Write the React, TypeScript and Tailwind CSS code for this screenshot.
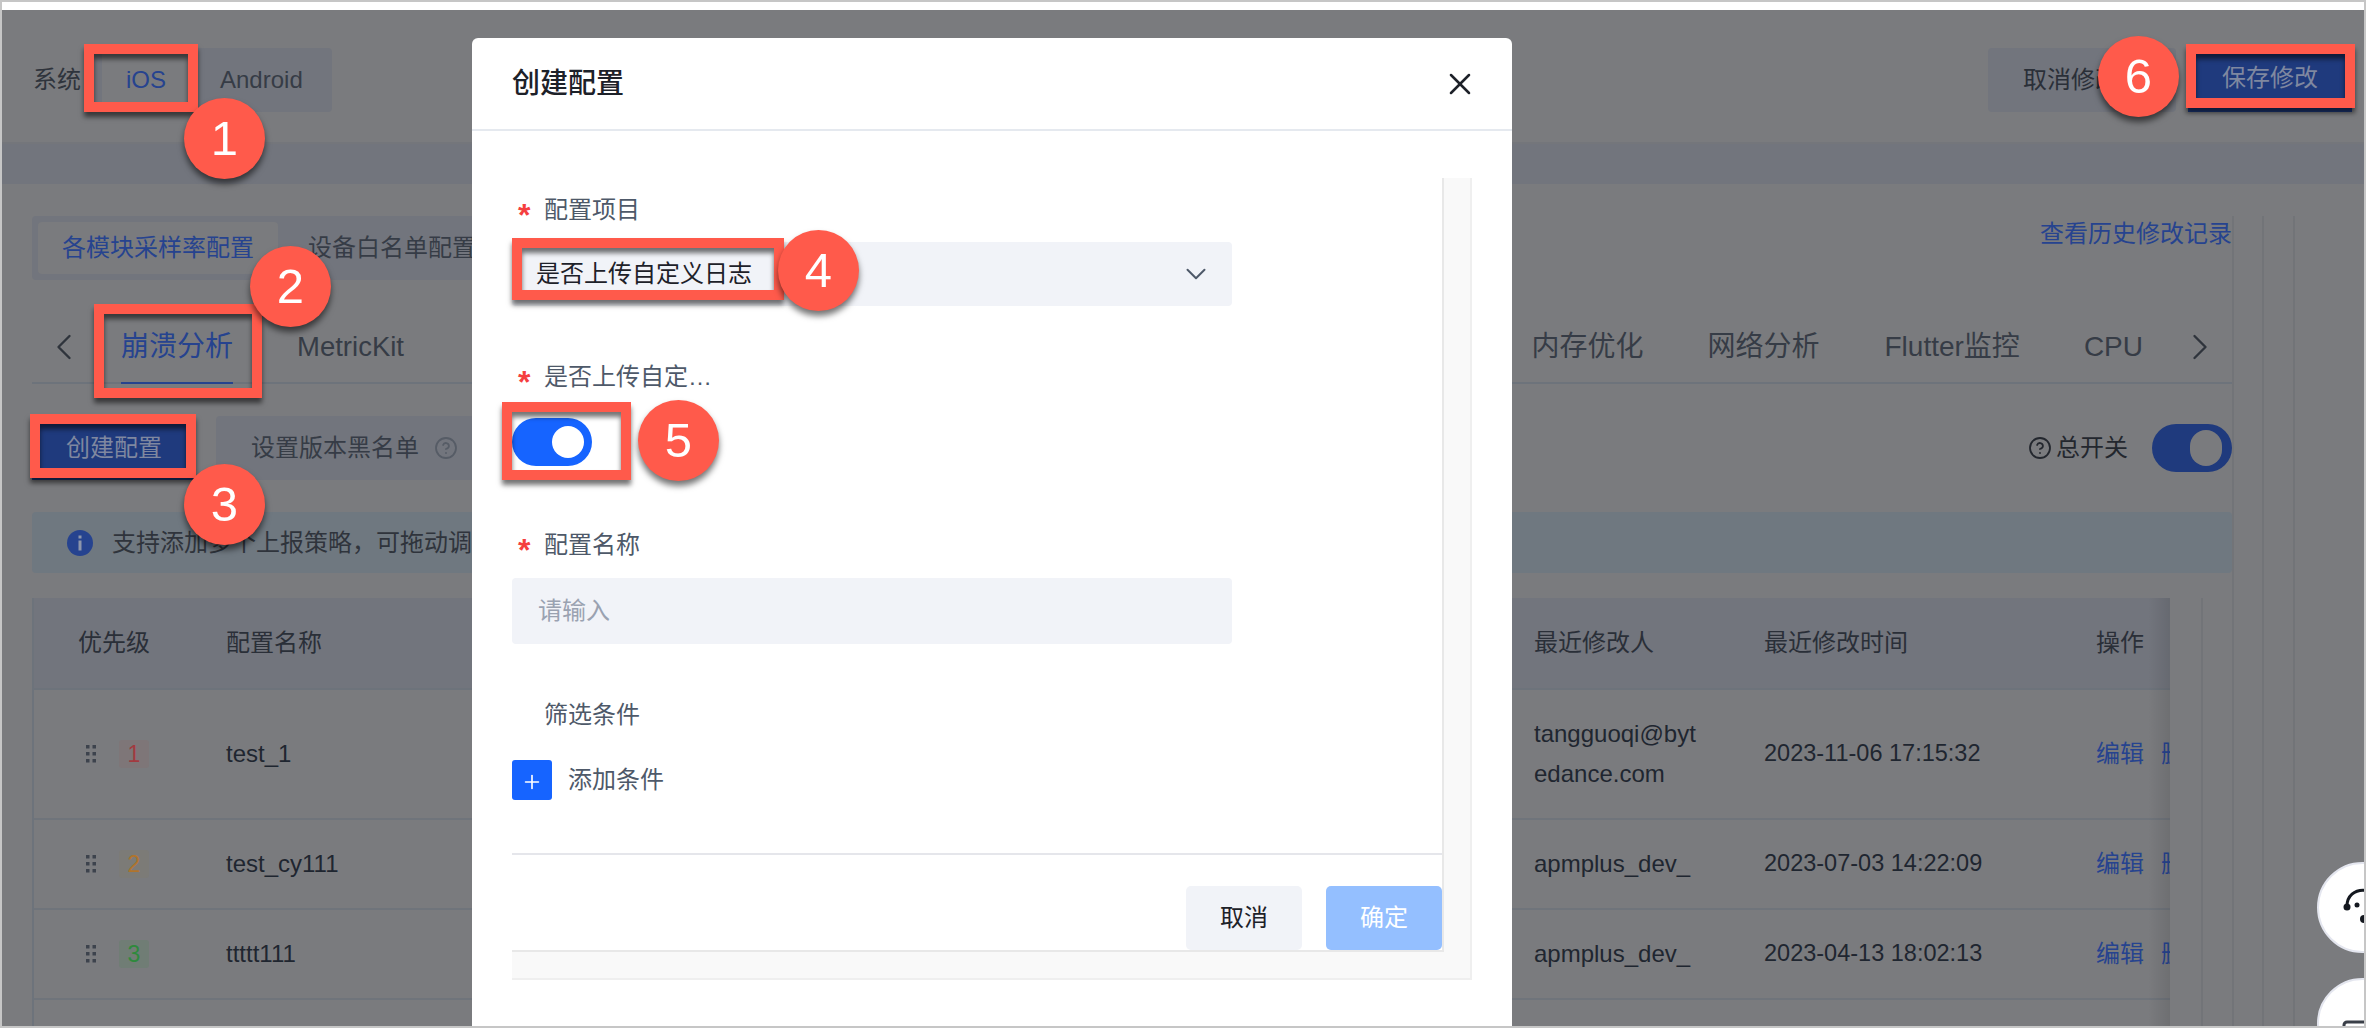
import { ChevronDown, ChevronLeft, ChevronRight, CircleHelp, Plus, X } from "lucide-react";

const rows = [
  { id: 1, name: "test_1", badge: "bg-[#7e7678] text-[#a23a40]", user: ["tangguoqi@byt", "edance.com"], time: "2023-11-06 17:15:32", h: "h-[130px]" },
  { id: 2, name: "test_cy111", badge: "bg-[#7c7b77] text-[#b0742c]", user: ["apmplus_dev_"], time: "2023-07-03 14:22:09", h: "h-[90px]" },
  { id: 3, name: "ttttt111", badge: "bg-[#707d75] text-[#2e8a3c]", user: ["apmplus_dev_"], time: "2023-04-13 18:02:13", h: "h-[90px]" },
];

function DragDots() {
  return (
    <svg width="10" height="18" viewBox="0 0 10 18" className="fill-[#3d434d]">
      <rect x="0" y="0" width="3.5" height="3.5" />
      <rect x="6.5" y="0" width="3.5" height="3.5" />
      <rect x="0" y="7" width="3.5" height="3.5" />
      <rect x="6.5" y="7" width="3.5" height="3.5" />
      <rect x="0" y="14" width="3.5" height="3.5" />
      <rect x="6.5" y="14" width="3.5" height="3.5" />
    </svg>
  );
}

function FieldLabel({ text, required = true }: { text: string; required?: boolean }) {
  return (
    <div className="flex h-[32px] items-center pl-[6px] text-[24px] leading-[32px] text-[#4e5969]">
      <span className="w-[26px] pt-[9px] text-[32px] font-bold leading-none text-[#f53f3f]">{required ? "*" : ""}</span>
      {text}
    </div>
  );
}

function Dialog() {
  return (
    <div className="absolute left-[472px] top-[38px] z-20 flex h-[988px] w-[1040px] flex-col rounded-t-[6px] bg-white">
      <div className="flex h-[93px] shrink-0 items-center justify-between border-b-2 border-[#e5e9ef] pl-[40px] pr-[34px]">
        <span className="text-[28px] font-medium text-[#1d2129]">创建配置</span>
        <X size={36} strokeWidth={1.7} className="text-[#1d2129]" />
      </div>
      <div className="pl-[40px] pt-[47px]">
        <div className="h-[802px] w-[960px] border-b-2 border-r-2 border-[#efefef] bg-[#f9f9f9]">
          <div className="flex h-[774px] w-[932px] flex-col border-b-2 border-r-2 border-[#e8e8e8] bg-white pt-[16px]">
            <FieldLabel text="配置项目" />
            <div className="mt-[16px] flex h-[64px] w-[720px] items-center justify-between rounded-[4px] bg-[#f1f3f8] pl-[24px] pr-[19px] text-[24px] text-[#1d2129]">
              是否上传自定义日志
              <ChevronDown size={34} strokeWidth={1.4} className="text-[#4e5969]" />
            </div>
            <div className="mt-[55px]">
              <FieldLabel text="是否上传自定…" />
            </div>
            <div className="mt-[25px] flex h-[48px] w-[80px] items-center justify-end rounded-full bg-[#1664ff] pr-[8px]">
              <span className="h-[32px] w-[32px] rounded-full bg-white" />
            </div>
            <div className="mt-[63px]">
              <FieldLabel text="配置名称" />
            </div>
            <div className="mt-[17px] flex h-[66px] w-[720px] items-center rounded-[4px] bg-[#f1f3f8] pl-[26px] text-[24px] text-[#9aa2b1]">
              请输入
            </div>
            <div className="mt-[55px]">
              <FieldLabel text="筛选条件" required={false} />
            </div>
            <div className="mt-[29px] flex h-[40px] items-center gap-[16px] text-[24px] text-[#4e5969]">
              <span className="flex h-[40px] w-[40px] items-center justify-center rounded-[3px] bg-[#1664ff]">
                <Plus size={22} strokeWidth={1.8} className="mt-[4px] text-white" />
              </span>
              添加条件
            </div>
            <div className="mt-[53px] flex justify-end gap-[24px] border-t-2 border-[#e5e6eb] pt-[31px]">
              <span className="flex h-[64px] w-[116px] items-center justify-center rounded-[5px] bg-[#f1f3f8] text-[24px] text-[#1d2129]">
                取消
              </span>
              <span className="flex h-[64px] w-[116px] items-center justify-center rounded-[5px] bg-[#94bfff] text-[24px] text-white">
                确定
              </span>
            </div>
          </div>
        </div>
      </div>
    </div>
  );
}

function Annotations() {
  const frame =
    "absolute z-30 border-[10px] border-[#ff5a4b] shadow-[0_5px_5px_rgba(0,0,0,0.55),inset_0_5px_5px_rgba(0,0,0,0.55)]";
  const badge =
    "absolute z-40 flex h-[81px] w-[81px] items-center justify-center rounded-full bg-[#ff5a4b] text-[49px] leading-none text-white shadow-[0_5px_6px_rgba(0,0,0,0.55)]";
  return (
    <>
      <div className={`${frame} left-[84px] top-[44px] h-[68px] w-[114px]`} />
      <div className={`${frame} left-[94px] top-[304px] h-[94px] w-[168px]`} />
      <div className={`${frame} left-[30px] top-[414px] h-[64px] w-[166px]`} />
      <div className={`${frame} left-[512px] top-[238px] h-[62px] w-[272px]`} />
      <div className={`${frame} left-[502px] top-[402px] h-[78px] w-[129px]`} />
      <div className={`${frame} left-[2186px] top-[44px] h-[64px] w-[169px]`} />
      <div className={`${badge} left-[184px] top-[98px]`}>1</div>
      <div className={`${badge} left-[250px] top-[246px]`}>2</div>
      <div className={`${badge} left-[184px] top-[464px]`}>3</div>
      <div className={`${badge} left-[778px] top-[230px]`}>4</div>
      <div className={`${badge} left-[638px] top-[400px]`}>5</div>
      <div className={`${badge} left-[2098px] top-[36px]`}>6</div>
    </>
  );
}

export default function App() {
  return (
    <div className="relative h-[1028px] w-[2366px] overflow-hidden bg-white pt-[10px] font-['Liberation_Sans','Noto_Sans_CJK_SC',sans-serif] text-[24px] text-[#2a2f38]">
      <div className="ml-[2px] flex h-[1016px] w-[2362px] flex-col bg-[#7a7b7e]">
        {/* top bar */}
        <div className="flex h-[134px] shrink-0 items-start justify-between border-b-2 border-[#74767b] pl-[31px] pr-[12px] pt-[38px]">
          <div className="flex items-center gap-[13px]">
            <span className="w-[48px] text-[#2f343c]">系统</span>
            <div className="flex h-[64px] items-center rounded-[4px] bg-[#72757d] pl-[8px] pr-[29px]">
              <span className="flex h-[52px] w-[88px] items-center justify-center bg-[#7a7b7e] text-[#26438f]">iOS</span>
              <span className="ml-[30px] text-[#363c46]">Android</span>
            </div>
          </div>
          <div className="flex gap-[12px]">
            <span className="flex h-[64px] w-[188px] items-center rounded-[4px] bg-[#72757d] pl-[35px] text-[#2a2f38]">取消修改</span>
            <span className="flex h-[64px] w-[164px] items-center justify-center bg-[#1f3a7d] pb-[4px] text-[#7f88a0]">保存修改</span>
          </div>
        </div>
        <div className="h-[40px] shrink-0 bg-[#72757d]" />

        <div className="flex min-h-0 flex-1 pt-[32px]">
          <div className="flex w-[2230px] shrink-0 flex-col pl-[30px]">
            <div className="flex h-[64px] shrink-0 items-start justify-between">
              <div className="flex h-[64px] w-[500px] items-center rounded-[4px] bg-[#72757d] pl-[6px]">
                <span className="flex h-[52px] w-[240px] items-center justify-center rounded-[4px] bg-[#7a7b7e] text-[#26438f]">各模块采样率配置</span>
                <span className="ml-[30px] text-[#363c46]">设备白名单配置</span>
              </div>
              <span className="text-[24px] leading-[36px] text-[#26438f]">查看历史修改记录</span>
            </div>

            {/* module tabs */}
            <div className="flex h-[104px] shrink-0 items-end justify-between border-b-2 border-[#6d737b] text-[28px] leading-[32px] text-[#363c46]">
              <div className="flex items-end">
                <ChevronLeft size={44} strokeWidth={1.3} className="mb-[13px] ml-[10px] text-[#2f343c]" />
                <span className="-mb-[2px] ml-[35px] border-b-2 border-[#26438f] pb-[19px] text-[#26438f]">崩溃分析</span>
                <span className="ml-[64px] pb-[19px] text-[27.5px]">MetricKit</span>
              </div>
              <div className="flex items-end">
                <span className="pb-[19px]">内存优化</span>
                <span className="ml-[64px] pb-[19px]">网络分析</span>
                <span className="ml-[65px] pb-[19px]">Flutter监控</span>
                <span className="ml-[64px] pb-[19px]">CPU</span>
                <ChevronRight size={44} strokeWidth={1.3} className="mb-[13px] ml-[35px] mr-[10px] text-[#2f343c]" />
              </div>
            </div>

            <div className="mt-[32px] flex h-[64px] shrink-0 items-center justify-between">
              <div className="flex items-center gap-[20px]">
                <span className="flex h-[64px] w-[164px] items-center justify-center bg-[#1f3a7d] text-[#7f88a0]">创建配置</span>
                <span className="flex h-[64px] w-[300px] items-center rounded-[4px] bg-[#72757d] pl-[35px] text-[#363c46]">
                  设置版本黑名单
                  <CircleHelp size={24} strokeWidth={1.8} className="ml-[15px] text-[#565c66]" />
                </span>
              </div>
              <div className="flex items-center">
                <CircleHelp size={24} strokeWidth={1.8} className="text-[#23272e]" />
                <span className="ml-[4px] text-[#23272e]">总开关</span>
                <span className="ml-[24px] flex h-[48px] w-[80px] items-center justify-end rounded-full bg-[#1f3a7d] pr-[10px]">
                  <span className="h-[36px] w-[32px] rounded-full bg-[#7a7b7e]" />
                </span>
              </div>
            </div>

            <div className="mt-[32px] flex h-[61px] shrink-0 items-center rounded-[4px] bg-[#6f7880] pl-[35px] text-[#2f343c]">
              <svg width="26" height="26" viewBox="0 0 26 26">
                <circle cx="13" cy="13" r="13" className="fill-[#26438f]" />
                <rect x="11.5" y="5.5" width="3" height="3" className="fill-[#8d96ab]" />
                <rect x="11.5" y="10.5" width="3" height="10" className="fill-[#8d96ab]" />
              </svg>
              <span className="ml-[19px] whitespace-nowrap">支持添加多个上报策略，可拖动调整优先级</span>
            </div>

            {/* config table */}
            <div className="mt-[25px] flex min-h-0 flex-1">
              <div className="relative w-[2138px] shrink-0 overflow-hidden border-l-2 border-[#6d737b]">
                <div className="grid h-[92px] grid-cols-[192px_1308px_230px_332px_74px] items-center border-b-2 border-[#6d737b] bg-[#72757d] text-[#2a2f38]">
                  <span className="pl-[44px]">优先级</span>
                  <span>配置名称</span>
                  <span>最近修改人</span>
                  <span>最近修改时间</span>
                  <span>操作</span>
                </div>
                {rows.map((r) => (
                  <div key={r.id} className={`grid ${r.h} grid-cols-[192px_1308px_230px_332px_74px] items-center border-b-2 border-[#6f747b] text-[#1f2630]`}>
                    <div className="flex items-center pl-[52px]">
                      <DragDots />
                      <span className={`ml-[23px] flex h-[28px] w-[30px] items-center justify-center rounded-[3px] text-[23px] ${r.badge}`}>{r.id}</span>
                    </div>
                    <span>{r.name}</span>
                    <div className="leading-[40px]">
                      {r.user.map((line) => (
                        <div key={line}>{line}</div>
                      ))}
                    </div>
                    <span className="text-[23.5px]">{r.time}</span>
                    <div className="flex gap-[17px] whitespace-nowrap text-[#26438f]">
                      <span>编辑</span>
                      <span>删除</span>
                    </div>
                  </div>
                ))}
                <div className="absolute bottom-0 right-0 top-0 w-[22px] bg-gradient-to-r from-transparent to-black/10" />
              </div>
              <div className="w-[33px] border-r-2 border-[#727478]" />
            </div>
          </div>
          <div className="w-[30px] border-l-2 border-[#727478]" />
          <div className="w-[31px] border-l-2 border-[#727478]" />
          <div className="flex-1 border-l-2 border-[#727478]" />
        </div>
      </div>

      <Dialog />
      <Annotations />

      {/* floating helpers, cut off by the window edge */}
      <div className="absolute left-[2317px] top-[862px] z-10 flex h-[91px] w-[91px] items-center justify-center rounded-full border-2 border-[#e4e6ef] bg-white">
        <svg width="44" height="44" viewBox="0 0 44 44" fill="none">
          <path d="M6 20 C6 -1 38 -1 38 20" stroke="#14181f" strokeWidth="3" />
          <circle cx="6" cy="21" r="3.5" fill="#14181f" />
          <circle cx="16" cy="19" r="2.5" fill="#14181f" />
          <circle cx="23" cy="33" r="4" fill="#14181f" />
        </svg>
      </div>
      <div className="absolute left-[2317px] top-[978px] z-10 flex h-[91px] w-[91px] items-center justify-center rounded-full border-2 border-[#e4e6ef] bg-white">
        <svg width="44" height="44" viewBox="0 0 44 44" fill="none" className="mt-[20px]">
          <rect x="3" y="10" width="34" height="30" rx="3" stroke="#3a3f48" strokeWidth="3" />
          <path d="M12 20 H24 M12 28 H24" stroke="#3a3f48" strokeWidth="3" />
        </svg>
      </div>

      {/* screenshot frame */}
      <div className="pointer-events-none absolute inset-0 z-50 border-2 border-[#c6c6c6]" />
    </div>
  );
}
